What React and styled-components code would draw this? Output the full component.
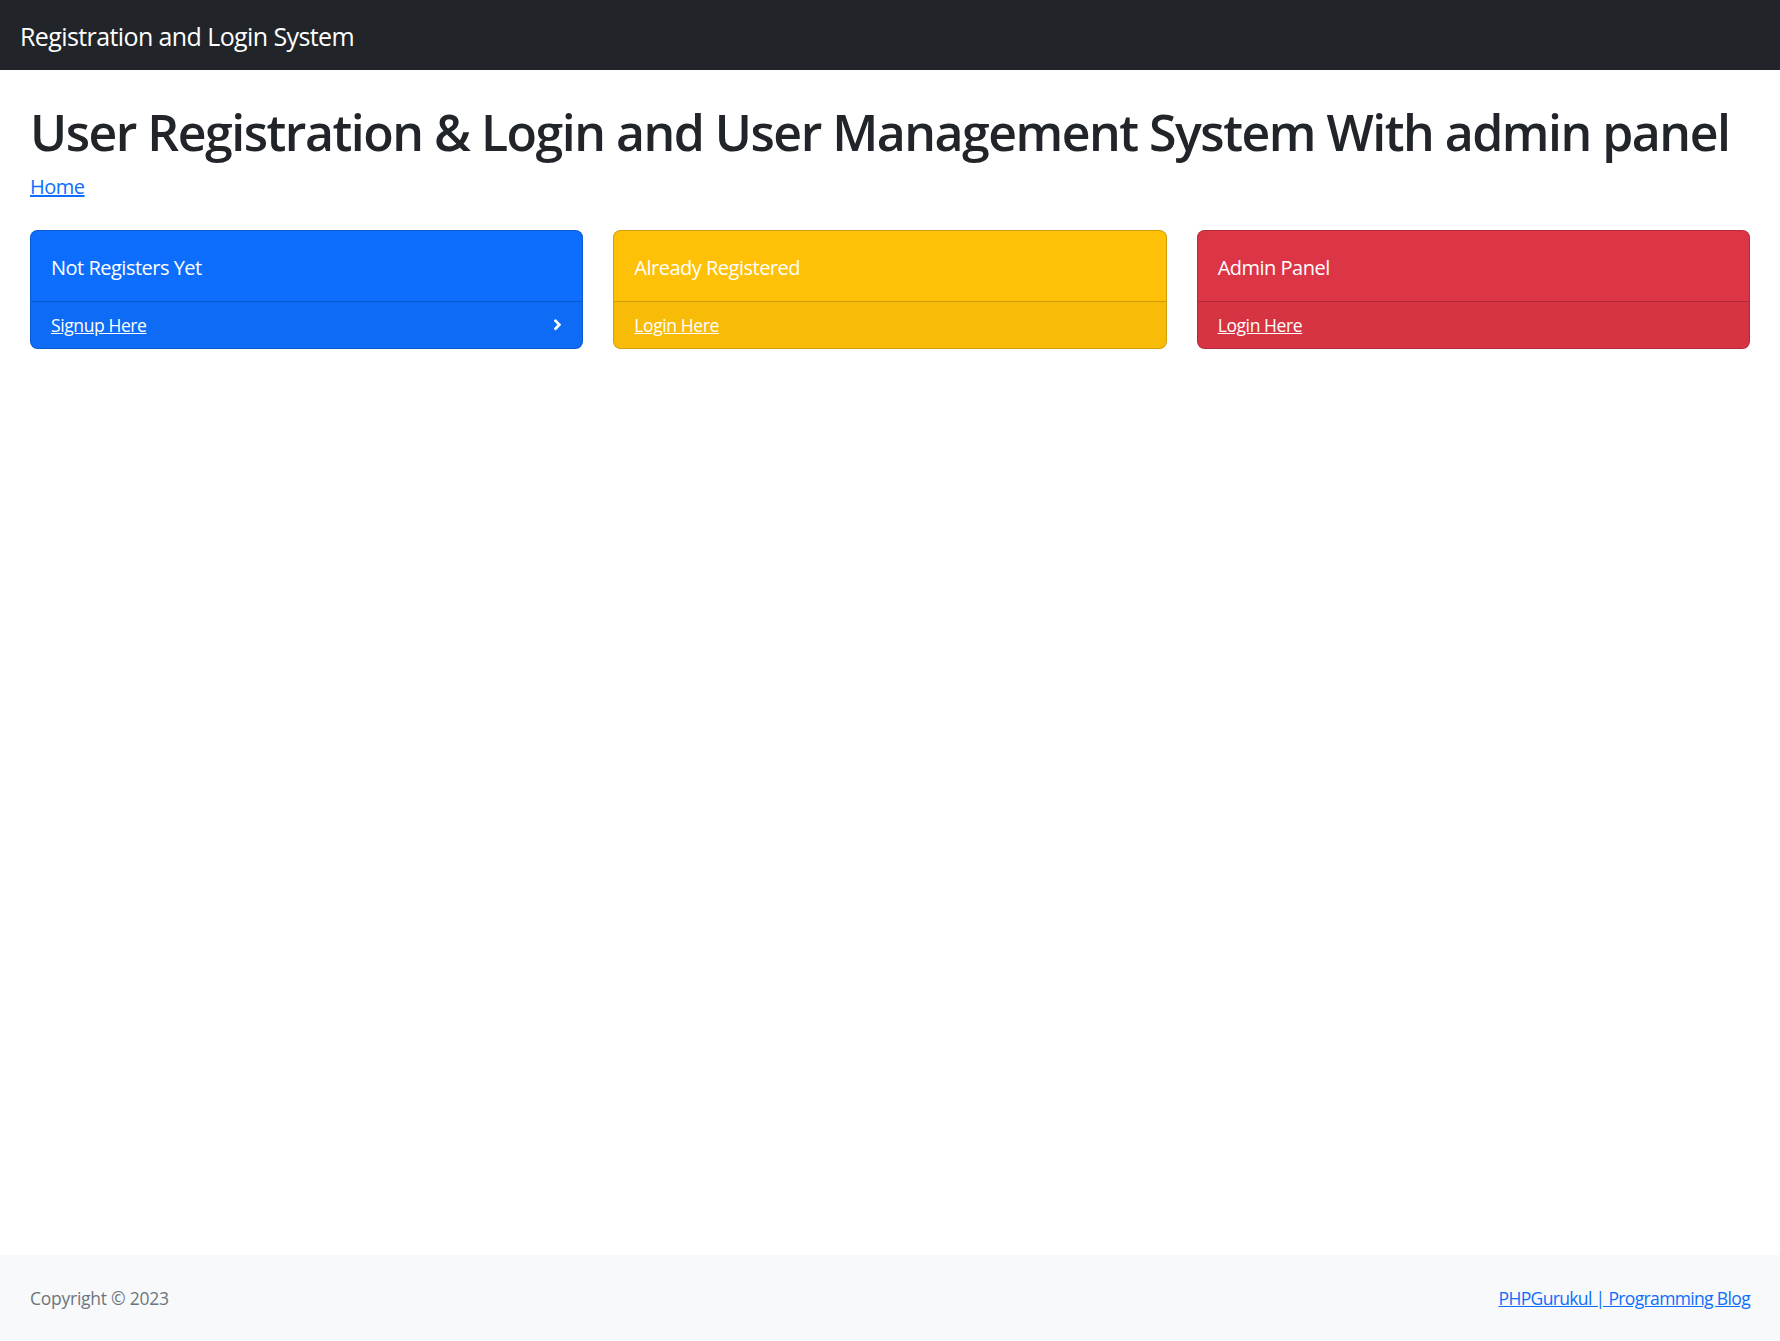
import React from 'react';
import styled, {createGlobalStyle} from 'styled-components';
import {FaAngleRight} from 'react-icons/fa';

const colors = {
    dark: '#212529',
    primary: '#0d6efd',
    warning: '#ffc107',
    danger: '#dc3545',
    muted: '#6c757d',
    light: '#f8f9fa',
};

const GlobalStyle = createGlobalStyle`
  *, *::before, *::after {
    box-sizing: border-box;
  }
  body {
    margin: 0;
    font-family: "Open Sans", "Noto Sans", sans-serif;
    font-size: 20px;
    line-height: 1.5;
    color: ${colors.dark};
    background: #fff;
  }
`;

const Layout = styled.div`
  min-height: 100vh;
  display: flex;
  flex-direction: column;
`;

const TopNav = styled.nav`
  height: 70px;
  background-color: ${colors.dark};
  display: flex;
  align-items: center;
  flex-shrink: 0;
`;

const Brand = styled.a`
  padding: 4px 0 0 20px;
  font-size: 25px;
  color: #fff;
  text-decoration: none;
  letter-spacing: -0.6px;
`;

const Main = styled.main`
  flex: 1;
  padding: 0 30px;
`;

const Title = styled.h1`
  margin: 32px 0 10px;
  font-size: 50px;
  font-weight: 600;
  line-height: 1.2;
  letter-spacing: -1.5px;
`;

const Breadcrumb = styled.ol`
  list-style: none;
  margin: 0 0 28px;
  padding: 0;
  display: flex;
  letter-spacing: -0.5px;
  a {
    color: ${colors.primary};
    text-decoration: underline;
  }
`;

const CardRow = styled.div`
  display: grid;
  grid-template-columns: repeat(3, 1fr);
  gap: 30px;
`;

const Card = styled.div`
  display: flex;
  flex-direction: column;
  background-color: ${props => colors[props.variant]};
  color: #fff;
  border: 1px solid rgba(0, 0, 0, .175);
  border-radius: 7.5px;
  overflow: hidden;
`;

const CardBody = styled.div`
  padding: 22px 20px 18px;
  letter-spacing: -0.5px;
`;

const CardFooter = styled.div`
  display: flex;
  align-items: center;
  justify-content: space-between;
  padding: 10px 20px;
  background-color: rgba(33, 37, 41, .03);
  border-top: 1px solid rgba(0, 0, 0, .175);
  font-size: 17.5px;
  line-height: 1.5;
  letter-spacing: -0.4px;
  a {
    color: #fff;
    text-decoration: underline;
  }
  svg {
    width: 9px;
    height: 17.5px;
  }
`;

const Footer = styled.footer`
  background-color: ${colors.light};
  padding: 30px;
  display: flex;
  align-items: center;
  justify-content: space-between;
  font-size: 17.5px;
  line-height: 1.5;
  .copy {
    color: ${colors.muted};
    letter-spacing: -0.25px;
  }
  a {
    color: ${colors.primary};
    text-decoration: underline;
    letter-spacing: -0.65px;
  }
`;

const cards = [
    {title: 'Not Registers Yet', link: 'Signup Here', variant: 'primary', arrow: true},
    {title: 'Already Registered', link: 'Login Here', variant: 'warning'},
    {title: 'Admin Panel', link: 'Login Here', variant: 'danger'},
];

const App = () => {
    return (
        <Layout>
            <GlobalStyle/>
            <TopNav>
                <Brand href="#">Registration and Login System</Brand>
            </TopNav>
            <Main>
                <Title>User Registration &amp; Login and User Management System With admin panel</Title>
                <Breadcrumb>
                    <li><a href="#">Home</a></li>
                </Breadcrumb>
                <CardRow>
                    {cards.map(card => (
                        <Card key={card.title} variant={card.variant}>
                            <CardBody>{card.title}</CardBody>
                            <CardFooter>
                                <a href="#">{card.link}</a>
                                {card.arrow && <FaAngleRight/>}
                            </CardFooter>
                        </Card>
                    ))}
                </CardRow>
            </Main>
            <Footer>
                <div className={'copy'}>Copyright © 2023</div>
                <a href="#">PHPGurukul | Programming Blog</a>
            </Footer>
        </Layout>
    );
};

export default App;
